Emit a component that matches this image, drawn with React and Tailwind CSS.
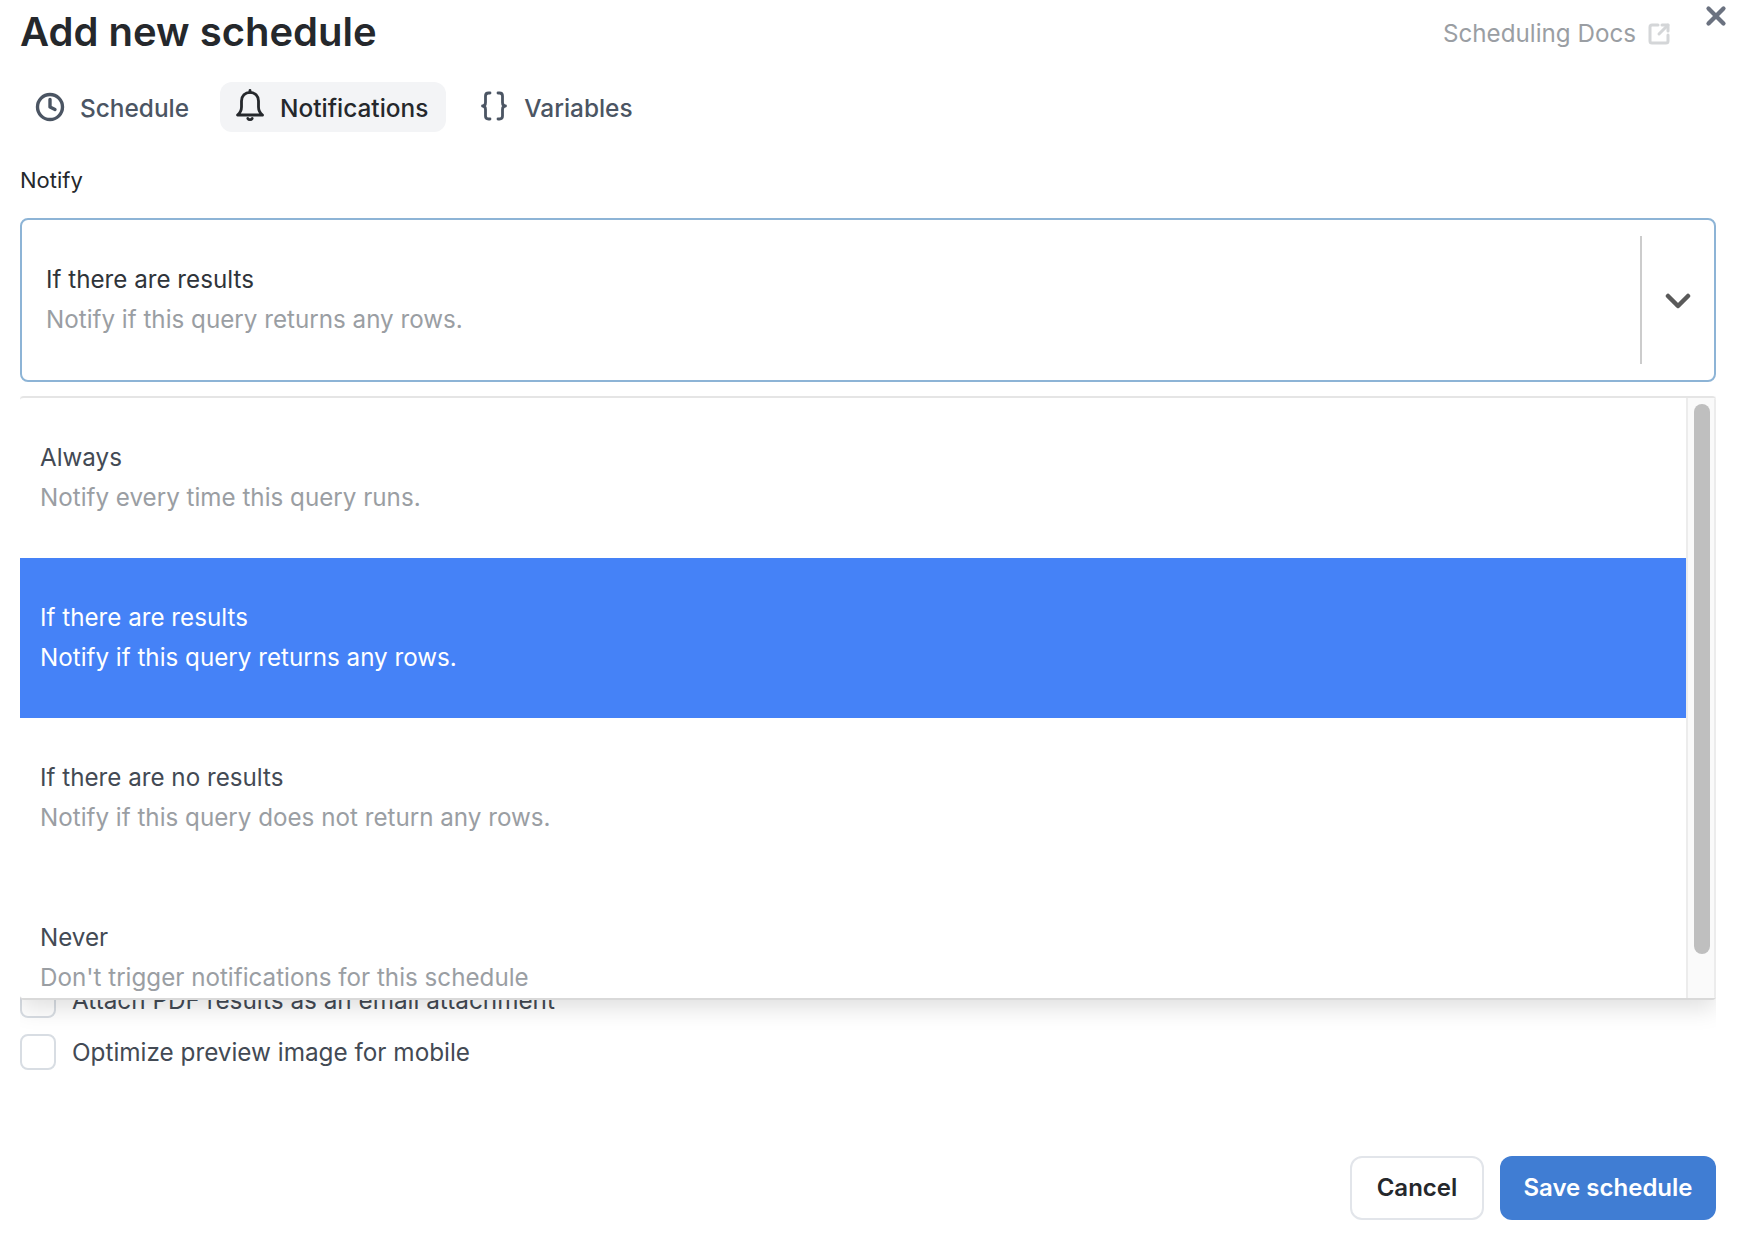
import { Clock, SquareArrowOutUpRight, X } from 'lucide-react';

const options = [
  { title: 'Always', description: 'Notify every time this query runs.' },
  { title: 'If there are results', description: 'Notify if this query returns any rows.', selected: true },
  { title: 'If there are no results', description: 'Notify if this query does not return any rows.' },
  { title: 'Never', description: "Don't trigger notifications for this schedule" },
];

const BellIcon = () => (
  <svg width="30" height="34" viewBox="0 0 30 34" fill="none" stroke="#25282c" strokeWidth="2.8" strokeLinecap="round" strokeLinejoin="round">
    <path d="M2.500 27c2.200-1.800 4-3.800 4-8v-6c0-5 3.600-8.600 8.500-8.600s8.500 3.600 8.500 8.600v6c0 4.200 1.800 6.200 4 8H2.500Z" />
    <path d="M15 4.400V2.400" />
    <path d="M12.800 30.500c.5.800 1.200 1.200 2.200 1.200s1.700-.4 2.200-1.200" />
  </svg>
);

const BracesIcon = () => (
  <svg width="28" height="32" viewBox="0 0 28 32" fill="none" stroke="#4b5563" strokeWidth="2.800" strokeLinecap="round" strokeLinejoin="round">
    <path d="M10 3H8.500C6.500 3 5.500 4.200 5.500 6v6.500c0 2-1.200 3.500-3 3.500 1.800 0 3 1.500 3 3.500V26c0 1.800 1 3 3 3H10" />
    <path d="M18 3h1.500c2 0 3 1.200 3 3v6.500c0 2 1.200 3.500 3 3.500-1.800 0-3 1.500-3 3.500V26c0 1.800-1 3-3 3H18" />
  </svg>
);

const Tab = ({ icon, label, active, className }) => (
  <div className={`flex h-[50px] items-center rounded-xl ${active ? 'bg-[#f3f4f6] text-[#25282c]' : 'text-[#4b5563]'} ${className}`}>
    {icon}
    <span className="pt-0.5 text-[24.4px] font-medium">{label}</span>
  </div>
);

const Checkbox = ({ label }) => (
  <label className="flex h-9 items-center gap-4">
    <span className="h-9 w-9 rounded-lg border-2 border-[#d8dde3] bg-white" />
    <span className="text-[24.3px] text-[#434a54]">{label}</span>
  </label>
);

export default function App() {
  return (
    <div className="relative h-[1244px] overflow-hidden bg-white pl-5 pr-7 font-['Inter',sans-serif]">
      <button className="absolute right-[17px] top-[5px] text-[#6b7280]">
        <X size={30} strokeWidth={3.4} className="-m-1" />
      </button>

      <div className="flex h-[64px] items-center justify-between">
        <h1 className="text-[40px] font-semibold text-[#25282c]">Add new schedule</h1>
        <a className="flex items-center gap-[11px] pr-[45px] pt-1 text-[24.2px] text-[#9a9ea3]">
          Scheduling Docs
          <SquareArrowOutUpRight size={24} strokeWidth={3} className="text-[#d4d6d8]" />
        </a>
      </div>

      <div className="mt-[18px] flex items-center gap-[15px]">
        <Tab icon={<Clock size={30} strokeWidth={2.7} className="mr-[15px] text-[#4b5563]" />} label="Schedule" className="pl-[15px] pr-[16px]" />
        <Tab icon={<span className="mr-[15px] -mt-1"><BellIcon /></span>} label="Notifications" active className="pl-[15px] pr-[18px]" />
        <Tab icon={<span className="mr-[16px] -mt-0.5"><BracesIcon /></span>} label="Variables" className="pl-[19px] pr-[16px]" />
      </div>

      <label className="mt-[33px] block text-[22px] leading-[30px] text-[#25282c]">Notify</label>

      <div className="relative mt-[23px]">
        <div className="flex h-[164px] items-center rounded-lg border-2 border-[#8db4d6] bg-white pl-[24px]">
          <div className="min-w-0 flex-1">
            <div className="text-[24.2px] leading-[40px] text-[#2f343a]">If there are results</div>
            <div className="text-[24.2px] leading-[40px] text-[#9a9ea3]">Notify if this query returns any rows.</div>
          </div>
          <div className="h-[128px] w-0.5 bg-[#cccccc]" />
          <div className="flex w-[72px] items-center justify-center pt-0.5">
            <svg width="26" height="16" viewBox="0 0 26 16" fill="none" stroke="#5a5a5a" strokeWidth="4.5" strokeLinecap="round" strokeLinejoin="round">
              <path d="M3 3l10 10L23 3" />
            </svg>
          </div>
        </div>

        <div className="absolute left-0 right-0 top-[178px] z-10 flex h-[604px] overflow-hidden rounded-sm border-t-2 border-b-2 border-t-[#e5e5e5] border-b-[#d9d9d9] bg-white shadow-[0_8px_24px_rgba(0,0,0,0.13)] [clip-path:inset(0_0_-40px_0)]">
          <div className="min-w-0 flex-1">
            {options.map((option) => (
              <div key={option.title} className={`flex h-[160px] flex-col justify-center pl-5 ${option.selected ? 'bg-[#4582f7]' : ''}`}>
                <div className={`text-[24.2px] leading-[40px] ${option.selected ? 'text-white' : 'text-[#434a54]'}`}>{option.title}</div>
                <div className={`text-[24.2px] leading-[40px] ${option.selected ? 'text-white' : 'text-[#9a9ea3]'}`}>{option.description}</div>
              </div>
            ))}
          </div>
          <div className="w-[30px] shrink-0 border-x-2 border-x-[#ececec] bg-[#fafafa] pl-[6px] pt-[6px]">
            <div className="h-[550px] w-[16px] rounded-full bg-[#bfbfbf]" />
          </div>
        </div>
      </div>

      <div className="mt-[600px] flex flex-col gap-4">
        <Checkbox label="Attach PDF results as an email attachment" />
        <Checkbox label="Optimize preview image for mobile" />
      </div>

      <div className="mt-[86px] flex justify-end gap-4">
        <button className="h-[64px] w-[134px] rounded-xl border-2 border-[#e2e5ea] bg-white text-[24px] font-semibold text-[#25282c]">Cancel</button>
        <button className="h-[64px] w-[216px] rounded-xl bg-[#407dd3] text-[24px] font-semibold text-white">Save schedule</button>
      </div>
    </div>
  );
}
